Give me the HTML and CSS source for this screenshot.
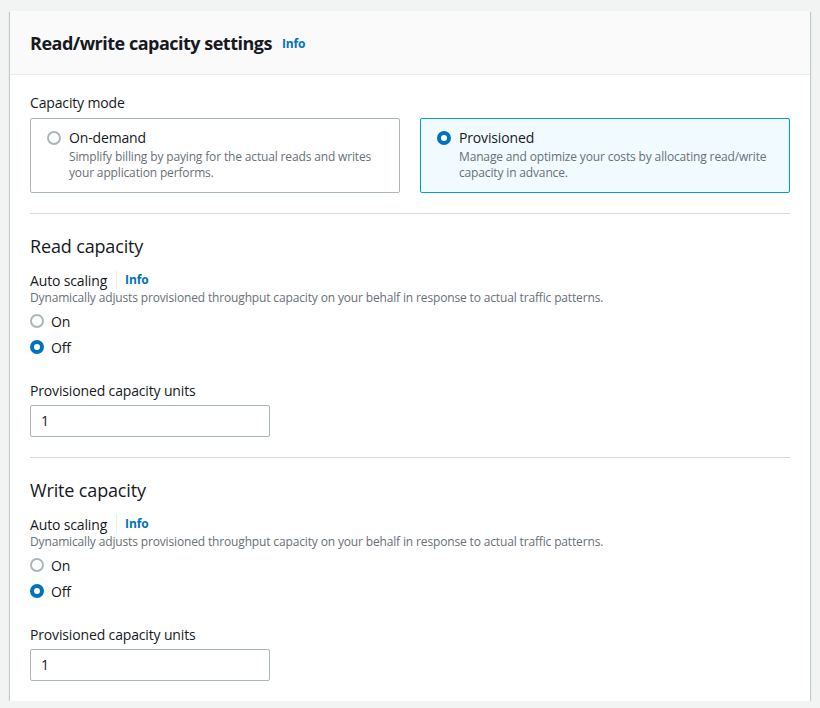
FILE: index.html
```html
<!DOCTYPE html>
<html>
<head>
<meta charset="utf-8">
<link rel="stylesheet" href="styles.css">
</head>
<body>
<div class="container">
  <div class="header">
    <h2 class="title">Read/write capacity settings</h2>
    <a class="info">Info</a>
  </div>
  <div class="content">
    <div class="field-label">Capacity mode</div>
    <div class="tiles">
      <div class="tile">
        <span class="radio"></span>
        <div class="tile-text">
          <div class="tile-title">On-demand</div>
          <div class="tile-desc">Simplify billing by paying for the actual reads and writes your application performs.</div>
        </div>
      </div>
      <div class="tile selected">
        <span class="radio checked"></span>
        <div class="tile-text">
          <div class="tile-title">Provisioned</div>
          <div class="tile-desc">Manage and optimize your costs by allocating read/write capacity in advance.</div>
        </div>
      </div>
    </div>
    <div class="divider first"></div>

    <h3 class="section-title">Read capacity</h3>
    <div class="label-row"><span class="label">Auto scaling</span><span class="sep"></span><a class="info small">Info</a></div>
    <div class="desc">Dynamically adjusts provisioned throughput capacity on your behalf in response to actual traffic patterns.</div>
    <div class="radios">
      <div class="opt"><span class="radio"></span><span>On</span></div>
      <div class="opt"><span class="radio checked"></span><span>Off</span></div>
    </div>
    <div class="field-label units">Provisioned capacity units</div>
    <div class="input">1</div>
    <div class="divider"></div>

    <h3 class="section-title">Write capacity</h3>
    <div class="label-row"><span class="label">Auto scaling</span><span class="sep"></span><a class="info small">Info</a></div>
    <div class="desc">Dynamically adjusts provisioned throughput capacity on your behalf in response to actual traffic patterns.</div>
    <div class="radios">
      <div class="opt"><span class="radio"></span><span>On</span></div>
      <div class="opt"><span class="radio checked"></span><span>Off</span></div>
    </div>
    <div class="field-label units">Provisioned capacity units</div>
    <div class="input">1</div>
  </div>
</div>
</body>
</html>
```

FILE: styles.css
```css
html, body {
  margin: 0;
  padding: 0;
  background: #f2f3f3;
}
body {
  font-family: "Open Sans", "Noto Sans", sans-serif;
  color: #16191f;
  font-size: 14px;
  letter-spacing: -0.15px;
  padding: 11px 10px 0 10px;
}
.container {
  width: 800px;
  background: #fff;
  box-shadow: 0 1px 1px 0 rgba(0, 28, 36, 0.3), 1px 1px 1px 0 rgba(0, 28, 36, 0.15), -1px 1px 1px 0 rgba(0, 28, 36, 0.15);
}
.header {
  height: 64px;
  box-sizing: border-box;
  background: #fafafa;
  border-bottom: 1px solid #eaeded;
  display: flex;
  align-items: center;
  padding: 0 20px;
  gap: 10px;
}
.title {
  margin: 0;
  font-size: 18px;
  font-weight: 700;
  line-height: 22px;
  letter-spacing: -0.5px;
}
.info {
  color: #0073bb;
  font-weight: 700;
  font-size: 12px;
  line-height: 16px;
  margin-top: 3px;
}
.content {
  padding: 18px 20px 20px 20px;
}
.field-label {
  font-size: 14px;
  line-height: 20px;
  margin-bottom: 5px;
}
.tiles {
  display: grid;
  grid-template-columns: 1fr 1fr;
  gap: 20px;
}
.tile {
  border: 1px solid #aab7b8;
  border-radius: 2px;
  height: 75px;
  box-sizing: border-box;
  display: flex;
  gap: 8px;
  padding: 9px 15px 9px 16px;
}
.tile.selected {
  background: #f1faff;
  border-color: #00a1c9;
}
.tile-title {
  font-size: 14px;
  line-height: 20px;
}
.tile-desc {
  font-size: 12px;
  line-height: 16px;
  color: #687078;
  margin-top: 1px;
}
.radio {
  width: 14px;
  height: 14px;
  box-sizing: border-box;
  border: 2px solid #aab7b8;
  border-radius: 50%;
  background: #fff;
  flex: none;
  margin-top: 3px;
}
.radio.checked {
  border: 4px solid #0073bb;
}
.divider {
  height: 1px;
  background: #d5dbdb;
  margin: 20px 0 21px 0;
}
.section-title {
  margin: 0;
  font-size: 18px;
  font-weight: 400;
  line-height: 22px;
}
.label-row {
  display: flex;
  align-items: center;
  margin-top: 13px;
  height: 20px;
}
.sep {
  width: 1px;
  height: 18px;
  background: #eaeded;
  margin: 0 8px 0 9px;
}
.info.small {
  margin-top: 0;
}
.desc {
  font-size: 12px;
  line-height: 16px;
  color: #687078;
}
.radios {
  display: flex;
  flex-direction: column;
  gap: 6px;
  margin-top: 5px;
}
.opt {
  display: flex;
  align-items: center;
  gap: 7px;
  height: 20px;
}
.opt .radio {
  margin-top: 0;
}
.field-label.units {
  margin-top: 24px;
  margin-bottom: 4px;
}
.input {
  width: 240px;
  height: 32px;
  box-sizing: border-box;
  border: 1px solid #aab7b8;
  border-radius: 2px;
  padding: 5px 10px;
  line-height: 20px;
}
```
